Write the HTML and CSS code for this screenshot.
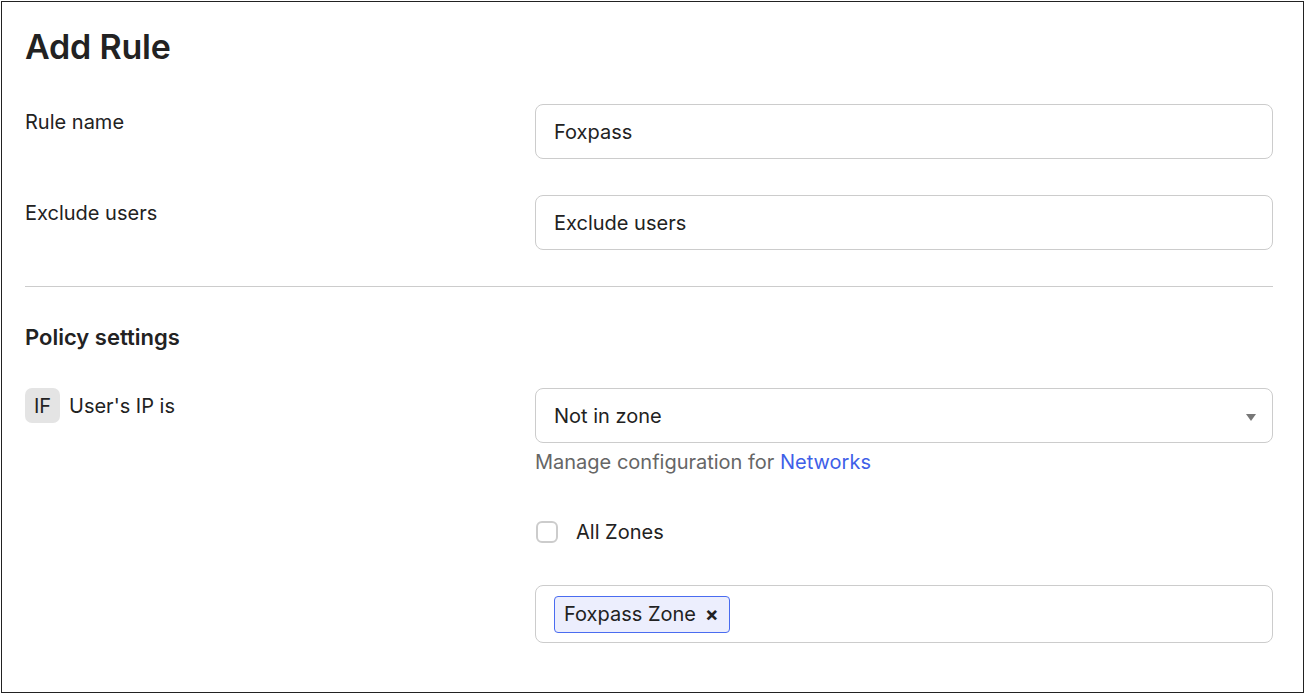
FILE: index.html
```html
<!DOCTYPE html>
<html lang="en">
<head>
    <meta charset="UTF-8">
    <meta name="viewport" content="width=device-width, initial-scale=1.0">
    <title>Add Rule</title>
    <link rel="stylesheet" href="styles.css">
</head>
<body>

    <div class="frame">
        <h1>Add Rule</h1>

        <div class="row">
            <label class="label" for="ruleName">Rule name</label>
            <input type="text" id="ruleName" class="field" value="Foxpass">
        </div>
        <div class="row">
            <label class="label" for="exclude">Exclude users</label>
            <input type="text" id="exclude" class="field" placeholder="Exclude users">
        </div>

        <hr class="divider">

        <h2>Policy settings</h2>

        <div class="row">
            <div class="label cond">
                <span class="badge">IF</span>
                <span>User's IP is</span>
            </div>
            <div class="control">
                <div class="field select">
                    <span>Not in zone</span>
                    <span class="caret"></span>
                </div>
                <p class="help">Manage configuration for <a href="#">Networks</a></p>
                <label class="check"><span class="box"></span> All Zones</label>
                <div class="field tags">
                    <span class="tag">Foxpass Zone <b>&times;</b></span>
                </div>
            </div>
        </div>
    </div>

</body>
</html>
```

FILE: styles.css
```css
body {
    margin: 0;
    font-family: Inter, "Noto Sans", sans-serif;
    color: #222;
    background: white;
}
.frame {
    margin: 1px;
    height: 692px;
    box-sizing: border-box;
    border: 1px solid #222;
    padding: 25px 30px 0 23px;
}
h1 {
    font-size: 34px;
    font-weight: 600;
    letter-spacing: -0.2px;
    line-height: 40px;
    margin: 0 0 37px;
}
h2 {
    font-size: 22px;
    font-weight: 600;
    line-height: 26px;
    margin: 0 0 38px;
}
.row {
    display: grid;
    grid-template-columns: 510px 1fr;
    margin-bottom: 36px;
}
.label {
    font-size: 20px;
    line-height: 24px;
    padding-top: 6px;
}
.field {
    box-sizing: border-box;
    width: 100%;
    height: 55px;
    border: 1px solid #ccc;
    border-radius: 8px;
    padding: 0 18px;
    font-family: inherit;
    font-size: 20px;
    color: #222;
    background: white;
}
.field::placeholder {
    color: #222;
}
.divider {
    border: none;
    border-top: 1px solid #ccc;
    margin: 0 0 37px;
}
.cond {
    display: flex;
    align-items: center;
    gap: 9px;
    padding-top: 0;
    align-self: start;
    height: 35px;
}
.badge {
    width: 35px;
    height: 35px;
    border-radius: 7px;
    background: #e4e4e4;
    display: flex;
    align-items: center;
    justify-content: center;
    font-size: 20px;
}
.select {
    display: flex;
    align-items: center;
    justify-content: space-between;
    height: 55px;
    padding-right: 16px;
}
.caret {
    width: 0;
    height: 0;
    border-left: 5px solid transparent;
    border-right: 5px solid transparent;
    border-top: 7px solid #777;
    margin-top: 3px;
}
.help {
    margin: 7px 0 0;
    font-size: 20px;
    color: #666;
}
.help a {
    color: #3f5fe8;
    text-decoration: none;
}
.check {
    display: flex;
    align-items: center;
    gap: 18px;
    margin-top: 46px;
    margin-left: 1px;
    font-size: 20px;
}
.box {
    width: 18px;
    height: 18px;
    border: 2px solid #ccc;
    border-radius: 6px;
}
.tags {
    margin-top: 41px;
    height: 58px;
    display: flex;
    align-items: center;
}
.tag {
    display: inline-flex;
    align-items: center;
    gap: 9px;
    height: 37px;
    box-sizing: border-box;
    padding: 0 10px 0 9px;
    background: #eceefd;
    border: 1px solid #4a6cf0;
    border-radius: 4px;
    font-size: 20px;
}
.tag b {
    font-size: 20px;
}
```
